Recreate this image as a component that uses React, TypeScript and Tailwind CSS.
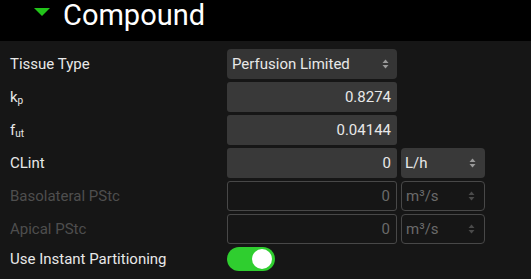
import React from "react";

const Arrows = ({ dim }: { dim?: boolean }) => (
  <svg width="7" height="12" viewBox="0 0 7 12" className="shrink-0">
    <path d="M0.5 5 L3.5 1.5 L6.5 5 Z" fill={dim ? "#4a4a4a" : "#9a9a9a"} />
    <path d="M0.5 7 L3.5 10.5 L6.5 7 Z" fill={dim ? "#4a4a4a" : "#9a9a9a"} />
  </svg>
);

const Label = ({ children, dim }: { children: React.ReactNode; dim?: boolean }) => (
  <div className={`w-[227px] shrink-0 pl-[10px] text-[15px] ${dim ? "text-[#4e4e4e]" : "text-[#e8e8e8]"}`}>{children}</div>
);

const Input = ({ value, dim }: { value: string; dim?: boolean }) => (
  <div
    className={`w-[170px] h-[30px] rounded-[3px] flex items-center justify-end pr-[6px] text-[15px] ${
      dim ? "border border-[#484848] text-[#6a6a6a] bg-[#161616]" : "bg-[#393939] text-[#e8e8e8]"
    }`}
  >
    {value}
  </div>
);

const Unit = ({ value, dim }: { value: string; dim?: boolean }) => (
  <div
    className={`ml-[4px] w-[84px] h-[30px] rounded-[4px] flex items-center justify-between pl-[4px] pr-[9px] text-[15px] ${
      dim ? "border border-[#484848] text-[#6a6a6a] bg-[#161616]" : "bg-[#393939] text-[#e8e8e8]"
    }`}
  >
    <span>{value}</span>
    <Arrows dim={dim} />
  </div>
);

export default function App() {
  return (
    <div className="w-[531px] h-[279px] bg-[#161616] overflow-hidden" style={{ fontFamily: "Roboto, 'Noto Sans', sans-serif" }}>
      <div className="h-[41px] bg-black flex items-start pl-[34px]">
        <svg width="16" height="8" viewBox="0 0 16 8" className="mr-[13px] mt-[8px]">
          <path d="M0 0 L16 0 L8 8 Z" fill="#22c41a" />
        </svg>
        <span className="text-[29px] text-white leading-[30px]">Compound</span>
      </div>
      <div className="pt-[8px] flex flex-col gap-[3px]">
        <div className="flex items-center h-[30px]">
          <Label>Tissue Type</Label>
          <div className="w-[170px] h-[30px] rounded-[4px] bg-[#353535] flex items-center justify-between pl-[5px] pr-[8px] text-[15px] text-[#e8e8e8]">
            <span>Perfusion Limited</span>
            <Arrows />
          </div>
        </div>
        <div className="flex items-center h-[30px]">
          <Label>
            k<sub className="text-[10px]">p</sub>
          </Label>
          <Input value="0.8274" />
        </div>
        <div className="flex items-center h-[30px]">
          <Label>
            f<sub className="text-[10px]">ut</sub>
          </Label>
          <Input value="0.04144" />
        </div>
        <div className="flex items-center h-[30px]">
          <Label>CLint</Label>
          <Input value="0" />
          <Unit value="L/h" />
        </div>
        <div className="flex items-center h-[30px]">
          <Label dim>Basolateral PStc</Label>
          <Input value="0" dim />
          <Unit value="m³/s" dim />
        </div>
        <div className="flex items-center h-[30px]">
          <Label dim>Apical PStc</Label>
          <Input value="0" dim />
          <Unit value="m³/s" dim />
        </div>
        <div className="flex items-center h-[24px]">
          <Label>Use Instant Partitioning</Label>
          <div className="w-[48px] h-[24px] rounded-full bg-[#2fce2f] flex items-center justify-end pr-[3px]">
            <div className="w-[20px] h-[20px] rounded-full bg-white" />
          </div>
        </div>
      </div>
    </div>
  );
}
